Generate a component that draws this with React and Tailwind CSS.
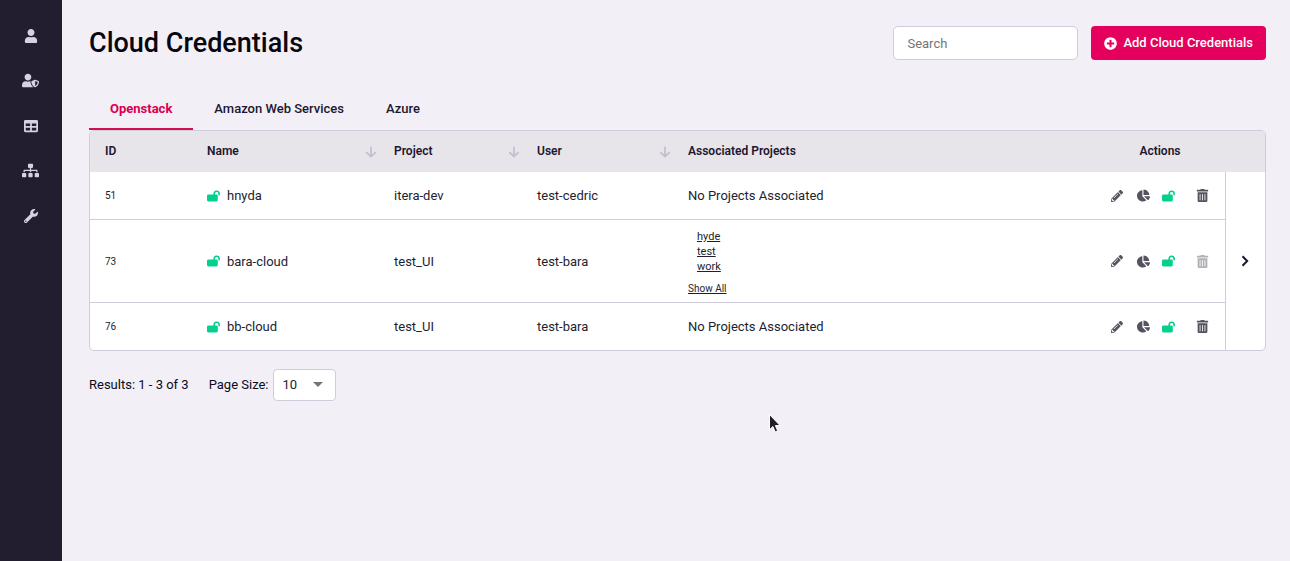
import React, { useState } from "react";
import {
  FaUser,
  FaUserShield,
  FaTable,
  FaSitemap,
  FaWrench,
  FaPlusCircle,
  FaPencilAlt,
  FaChartPie,
  FaTrashAlt,
} from "react-icons/fa";

const navItems = [
  { label: "Profile", Icon: FaUser, size: "size-[14px]" },
  { label: "User management", Icon: FaUserShield, size: "size-[17px]" },
  { label: "Projects", Icon: FaTable, size: "size-[14px]" },
  { label: "Organizations", Icon: FaSitemap, size: "size-[17px]" },
  { label: "Settings", Icon: FaWrench, size: "size-[14px]" },
];

const tabs = ["Openstack", "Amazon Web Services", "Azure"];

const credentials = [
  { id: 51, name: "hnyda", project: "itera-dev", user: "test-cedric", projects: [] },
  { id: 73, name: "bara-cloud", project: "test_UI", user: "test-bara", projects: ["hyde", "test", "work"] },
  { id: 76, name: "bb-cloud", project: "test_UI", user: "test-bara", projects: [] },
];

function Sidebar() {
  return (
    <nav className="w-[62px] shrink-0 bg-[#221e2f] pt-[13px]">
      <ul>
        {navItems.map(({ label, Icon, size }) => (
          <li key={label}>
            <a
              href="#"
              aria-label={label}
              className="flex h-[45px] items-center justify-center pr-px text-[#d5d2e2]"
            >
              <Icon className={size} />
            </a>
          </li>
        ))}
      </ul>
    </nav>
  );
}

function OpenLock() {
  return (
    <svg viewBox="0 0 13 12" className="h-3 w-[13px]" fill="none">
      <rect x="0" y="4.4" width="10.8" height="7" rx="1.4" fill="currentColor" />
      <path d="M7.2 5.2V3.6a2.5 2.5 0 0 1 4.9-.6v1.8" stroke="currentColor" strokeWidth="1.6" strokeLinecap="round" />
    </svg>
  );
}

function SortArrow() {
  return (
    <svg viewBox="0 0 12 12" className="size-3" fill="none" stroke="#c3c0d0" strokeWidth="1.8" strokeLinecap="round" strokeLinejoin="round">
      <path d="M6 1.4v9.2M1.8 6.6L6 10.7l4.2-4.1" />
    </svg>
  );
}

function HeaderCell({ children, sortable, width }) {
  return (
    <th scope="col" className={`${width} h-[41px] pr-0.5 pl-[15px] text-left font-semibold`}>
      {sortable ? (
        <button type="button" className="flex w-full items-center justify-between">
          {children}
          <SortArrow />
        </button>
      ) : (
        children
      )}
    </th>
  );
}

function Actions({ name, locked }) {
  return (
    <div className="flex items-center pl-4 text-[#55535f]">
      <button type="button" aria-label={`Edit ${name}`} className="mr-[14px]">
        <FaPencilAlt className="size-3" />
      </button>
      <button type="button" aria-label={`Quotas of ${name}`} className="mr-3">
        <FaChartPie className="size-[13px]" />
      </button>
      <button type="button" aria-label={`Lock ${name}`} className="mr-[21px] text-[#03cf8f]">
        <OpenLock />
      </button>
      <button type="button" aria-label={`Delete ${name}`} disabled={locked} className="disabled:opacity-45">
        <FaTrashAlt className="size-[13px]" />
      </button>
    </div>
  );
}

function CredentialsTable() {
  return (
    <div className="overflow-hidden rounded-[5px] border border-[#cfccdb] bg-white">
      <table className="w-full table-fixed border-separate border-spacing-0 text-[13px] leading-[17px] text-[#221e2f]">
        <thead className="bg-[#e7e4ea] text-[12px] text-[#1b1730]">
          <tr>
            <HeaderCell width="w-[102px]">ID</HeaderCell>
            <HeaderCell width="w-[187px]" sortable>Name</HeaderCell>
            <HeaderCell width="w-[143px]" sortable>Project</HeaderCell>
            <HeaderCell width="w-[151px]" sortable>User</HeaderCell>
            <HeaderCell width="w-auto">Associated Projects</HeaderCell>
            <th scope="col" className="w-[130px] text-center font-semibold">Actions</th>
            <td className="w-10" />
          </tr>
        </thead>
        <tbody className="[&>tr:not(:last-child)>td:not([rowspan])]:border-b [&_td]:border-[#cfccdb]">
          {credentials.map((c, i) => (
            <tr key={c.id}>
              <td className={`${i === credentials.length - 1 ? "h-[47px]" : "h-12"} pl-[15px] text-[10px]`}>{c.id}</td>
              <td className="pl-[15px]">
                <span className="flex items-center gap-[7px]">
                  <span className="text-[#03cf8f]">
                    <OpenLock />
                  </span>
                  {c.name}
                </span>
              </td>
              <td className="pl-[15px]">{c.project}</td>
              <td className="pl-[15px]">{c.user}</td>
              <td className="pl-[15px]">
                {c.projects.length === 0 ? (
                  "No Projects Associated"
                ) : (
                  <div className="pt-[9px] pb-[7px]">
                    <ul className="pl-[9px] text-[11px] leading-[15px]">
                      {c.projects.map((p) => (
                        <li key={p}>
                          <a href="#" className="underline">{p}</a>
                        </li>
                      ))}
                    </ul>
                    <button type="button" className="mt-2 block text-[10px] leading-[13px] underline">
                      Show All
                    </button>
                  </div>
                )}
              </td>
              <td>
                <Actions name={c.name} locked={c.projects.length > 0} />
              </td>
              {i === 0 && (
                <td rowSpan={3} className="border-l">
                  <button type="button" aria-label="Show more columns" className="flex w-full justify-center">
                    <svg viewBox="0 0 12 12" className="size-3" fill="none" stroke="#1b1730" strokeWidth="2">
                      <path d="M2.5 1.2L7.2 6l-4.7 4.8" />
                    </svg>
                  </button>
                </td>
              )}
            </tr>
          ))}
        </tbody>
      </table>
    </div>
  );
}

export default function App() {
  const [active, setActive] = useState("Openstack");
  return (
    <div className="flex min-h-screen bg-[#f2eff6] font-['Roboto',sans-serif] text-[13px] text-[#0d0a18]">
      <Sidebar />
      <main className="min-w-0 flex-1 pt-[26px] pr-6 pb-6 pl-[27px]">
        <header className="flex items-center">
          <h1 className="flex-1 text-[27px] leading-[34px] font-medium text-[#08060f]">Cloud Credentials</h1>
          <input
            type="search"
            aria-label="Search"
            placeholder="Search"
            className="mr-[13px] h-[34px] w-[185px] rounded-[5px] border border-[#cfccdb] bg-white px-[13px] placeholder:text-[#757575]"
          />
          <button
            type="button"
            className="flex h-[34px] items-center gap-1.5 rounded bg-[#e4005c] px-[13px] font-medium text-white"
          >
            <FaPlusCircle className="size-[13px]" />
            Add Cloud Credentials
          </button>
        </header>

        <div role="tablist" className="mt-[27px] flex">
          {tabs.map((tab) => (
            <button
              key={tab}
              type="button"
              role="tab"
              aria-selected={tab === active}
              onClick={() => setActive(tab)}
              className={`h-[43px] border-b-2 px-[21px] pt-0.5 ${
                tab === active
                  ? "border-[#d0104f] font-bold text-[#d9004f]"
                  : "border-transparent font-medium text-[#1b1730]"
              }`}
            >
              {tab}
            </button>
          ))}
        </div>

        <CredentialsTable />

        <footer className="mt-[18px] flex items-center">
          <p className="mr-5">Results: 1 - 3 of 3</p>
          <label htmlFor="page-size" className="mr-1">Page Size:</label>
          <div className="relative">
            <select
              id="page-size"
              defaultValue="10"
              className="h-8 w-[63px] appearance-none rounded border border-[#cfccdb] bg-white pl-[9px] text-[#221e2f]"
            >
              <option>10</option>
              <option>25</option>
              <option>50</option>
            </select>
            <svg viewBox="0 0 10 5" className="pointer-events-none absolute top-[13px] right-[13px] h-[5px] w-[10px]" fill="#757575">
              <path d="M0 0h10L5 5z" />
            </svg>
          </div>
        </footer>
      </main>

      <svg viewBox="0 0 14 21" aria-hidden="true" className="pointer-events-none absolute top-[413px] left-[768px] h-[21px] w-[14px]" fill="#221e26" stroke="#fff" strokeWidth="1">
        <path d="M1.5 1.5v15.3l3.4-3.3 2.3 5.4 2.5-1.1-2.3-5.2h4.7z" />
      </svg>
    </div>
  );
}
